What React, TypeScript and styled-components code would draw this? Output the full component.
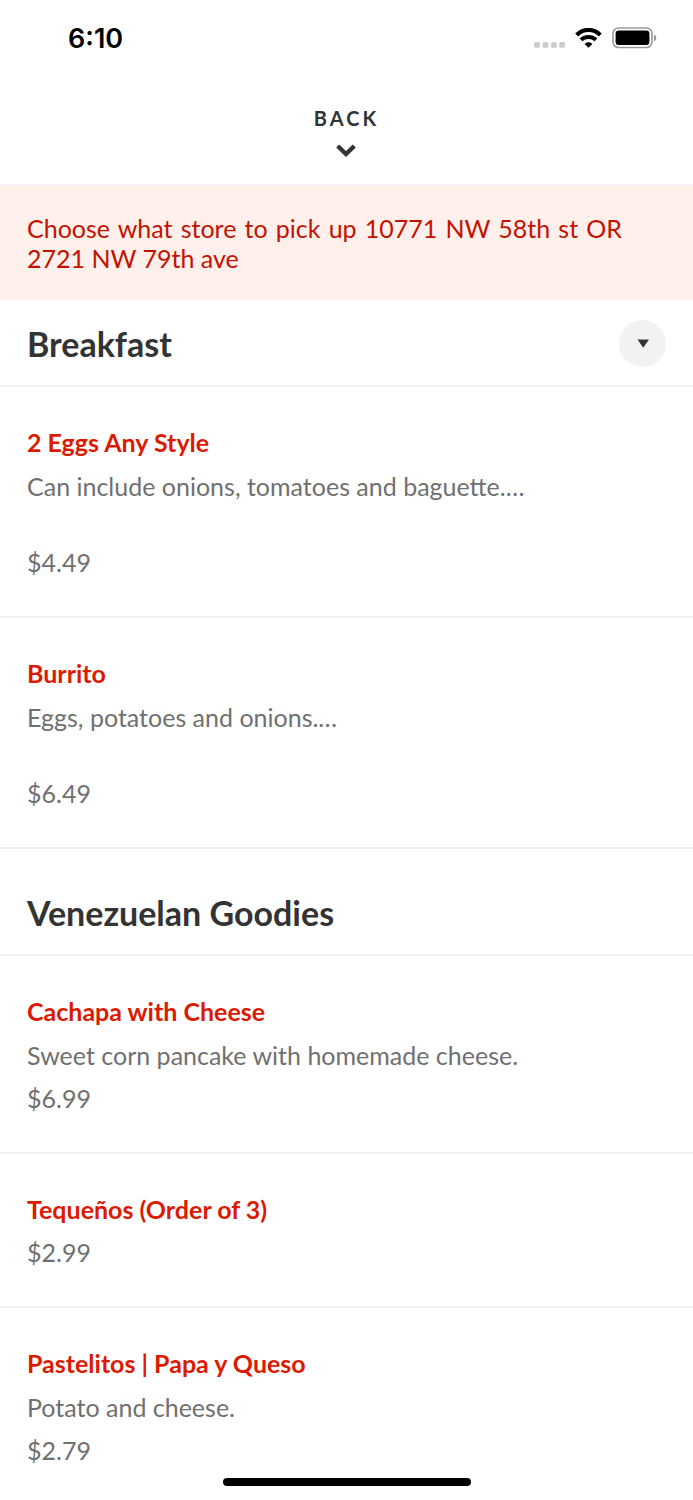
import React from "react";
import styled, { createGlobalStyle } from "styled-components";

const GlobalStyle = createGlobalStyle`
  *, *::before, *::after { box-sizing: border-box; }
  body {
    margin: 0;
    background: #ffffff;
    color: #333333;
    font-family: Lato, "Liberation Sans", sans-serif;
  }
  h2, h3, p, ul { margin: 0; padding: 0; }
`;

const Screen = styled.div`
  display: flex;
  flex-direction: column;
  height: 100vh;
  background: #ffffff;
`;

const StatusBar = styled.div`
  flex: none;
  display: flex;
  align-items: center;
  justify-content: space-between;
  height: 76px;
  padding: 0 36px 0 68px;
`;

const Clock = styled.time`
  padding-top: 2px;
  font-family: Inter, "Liberation Sans", sans-serif;
  font-size: 27px;
  font-weight: 600;
  line-height: 32px;
  color: #000000;
`;

const StatusIcons = styled.div`
  display: flex;
  align-items: center;
  gap: 10px;

  svg { display: block; }
`;

const Header = styled.header`
  flex: none;
  display: flex;
  justify-content: center;
  padding: 28px 28px 26px;
  border-bottom: 2px solid #f2f2f2;
`;

const BackButton = styled.button`
  display: flex;
  flex-direction: column;
  align-items: center;
  gap: 12px;
  padding: 0;
  border: 0;
  background: none;
  color: #333333;
  font-family: inherit;
  font-size: 20px;
  font-weight: 700;
  line-height: 28px;
  letter-spacing: 3px;
  cursor: pointer;

  svg { display: block; }
`;

const Scroller = styled.main`
  flex: 1;
  min-height: 0;
  overflow-y: auto;
  scrollbar-width: none;
`;

const Notice = styled.p`
  && { padding: 27px 71px 27px 27px; }
  background: #fff0eb;
  color: #c41200;
  font-size: 25px;
  line-height: 30px;
  text-align: justify;
`;

const SectionHeader = styled.div<{ $spaced?: boolean }>`
  display: flex;
  align-items: center;
  justify-content: space-between;
  padding: ${(p) => (p.$spaced ? "40px" : "20px")} 27px 18px;
  border-bottom: 2px solid #f2f2f2;
`;

const SectionTitle = styled.h2`
  font-size: 34px;
  font-weight: 700;
  line-height: 47px;
`;

const ToggleButton = styled.button`
  display: flex;
  align-items: center;
  justify-content: center;
  width: 47px;
  height: 47px;
  padding: 0;
  border: 0;
  border-radius: 50%;
  background: #f2f2f2;
  cursor: pointer;
`;

const ItemList = styled.ul`
  list-style: none;
`;

const Item = styled.li`
  padding: 39px 27px 37px;
  border-bottom: 2px solid #f2f2f2;
  font-size: 25px;
  line-height: 33px;
`;

const ItemName = styled.h3`
  color: #dc1a00;
  font-size: 25px;
  font-weight: 700;
`;

const Description = styled.p`
  && { margin-top: 11px; }
  color: #707070;
  white-space: pre-line;
`;

const Price = styled.p`
  && { margin-top: 10px; }
  color: #707070;
`;

const HomeIndicator = styled.div`
  position: fixed;
  bottom: 14px;
  left: 50%;
  width: 248px;
  height: 8px;
  border-radius: 4px;
  background: #000000;
  transform: translateX(-50%);
`;

interface MenuItem {
  name: string;
  description?: string;
  price: string;
}

interface MenuSection {
  title: string;
  items: MenuItem[];
}

const sections: MenuSection[] = [
  {
    title: "Breakfast",
    items: [
      {
        name: "2 Eggs Any Style",
        description: "Can include onions, tomatoes and baguette.…\n\u00a0",
        price: "$4.49",
      },
      {
        name: "Burrito",
        description: "Eggs, potatoes and onions.…\n\u00a0",
        price: "$6.49",
      },
    ],
  },
  {
    title: "Venezuelan Goodies",
    items: [
      {
        name: "Cachapa with Cheese",
        description: "Sweet corn pancake with homemade cheese.",
        price: "$6.99",
      },
      { name: "Tequeños (Order of 3)", price: "$2.99" },
      {
        name: "Pastelitos | Papa y Queso",
        description: "Potato and cheese.",
        price: "$2.79",
      },
    ],
  },
];

const SignalIcon = () => (
  <svg width="32" height="20" viewBox="0 0 32 20" fill="#cccccc" aria-hidden="true">
    {[1.2, 9.6, 18, 26.2].map((x) => (
      <rect key={x} x={x} y="14" width="5.8" height="5.8" rx="1.6" />
    ))}
  </svg>
);

const WifiIcon = () => (
  <svg width="27" height="20" viewBox="0 0 27 20" fill="none" stroke="#000000" aria-hidden="true">
    <path d="M1.7 7C8.4 .2 18.6 .2 25.3 7" strokeWidth="4.2" />
    <path d="M6 11.8C10.2 7.9 16.8 7.9 21 11.8" strokeWidth="4" />
    <path d="M9.6 15.9C11.8 13.7 15.2 13.7 17.4 15.9L13.5 19.8Z" fill="#000000" stroke="none" />
  </svg>
);

const BatteryIcon = () => (
  <svg width="45" height="22" viewBox="0 0 45 22" aria-hidden="true">
    <rect x="1" y="1" width="39" height="19.5" rx="5.5" fill="none" stroke="#999999" strokeWidth="1.6" />
    <rect x="3.6" y="3.6" width="33.8" height="14.4" rx="3" fill="#000000" />
    <path d="M42 7.4C45 8.6 45 13 42 14.2Z" fill="#999999" />
  </svg>
);

const ChevronIcon = () => (
  <svg width="22" height="14" viewBox="0 0 22 14" fill="none" stroke="#333333" strokeWidth="4.4" aria-hidden="true">
    <path d="M1.7 2L10 10L18.3 2" />
  </svg>
);

const TriangleIcon = () => (
  <svg width="12" height="9" viewBox="0 0 12 9" fill="#333333" aria-hidden="true">
    <path d="M.5 .5H12L6.2 8.8Z" />
  </svg>
);

export default function App() {
  return (
    <Screen>
      <GlobalStyle />
      <StatusBar>
        <Clock>6:10</Clock>
        <StatusIcons>
          <SignalIcon />
          <WifiIcon />
          <BatteryIcon />
        </StatusIcons>
      </StatusBar>
      <Header>
        <BackButton type="button">
          BACK
          <ChevronIcon />
        </BackButton>
      </Header>
      <Scroller>
        <Notice>Choose what store to pick up 10771 NW 58th st OR 2721 NW 79th ave</Notice>
        {sections.map((section, index) => (
          <section key={section.title}>
            <SectionHeader $spaced={index > 0}>
              <SectionTitle>{section.title}</SectionTitle>
              {index === 0 && (
                <ToggleButton type="button" aria-label="Choose a menu section">
                  <TriangleIcon />
                </ToggleButton>
              )}
            </SectionHeader>
            <ItemList>
              {section.items.map((item) => (
                <Item key={item.name}>
                  <ItemName>{item.name}</ItemName>
                  {item.description && <Description>{item.description}</Description>}
                  <Price>{item.price}</Price>
                </Item>
              ))}
            </ItemList>
          </section>
        ))}
      </Scroller>
      <HomeIndicator />
    </Screen>
  );
}
